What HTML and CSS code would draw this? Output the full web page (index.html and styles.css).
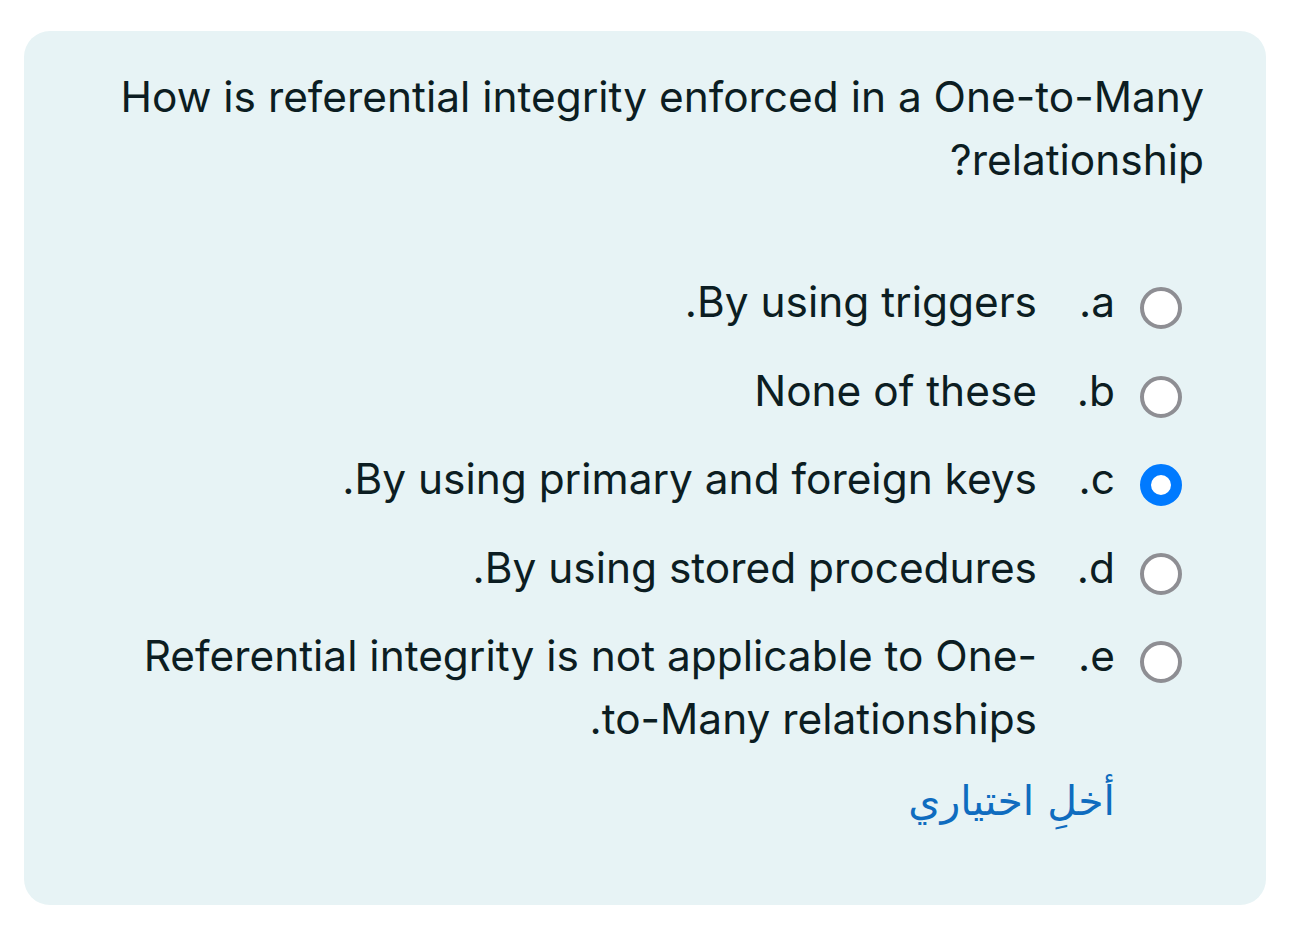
FILE: index.html
```html
<!DOCTYPE html>
<html lang="ar" dir="rtl">
<head>
<meta charset="utf-8">
<title>Question</title>
<link rel="stylesheet" href="styles.css">
</head>
<body>
<div class="card">
  <div class="question">How is referential integrity enforced in a One-to-Many relationship?</div>
  <div class="options">
    <div class="option">
      <span class="radio"></span>
      <span class="num">a.</span>
      <span class="text">By using triggers.</span>
    </div>
    <div class="option">
      <span class="radio"></span>
      <span class="num">b.</span>
      <span class="text">None of these</span>
    </div>
    <div class="option">
      <span class="radio checked"></span>
      <span class="num">c.</span>
      <span class="text">By using primary and foreign keys.</span>
    </div>
    <div class="option">
      <span class="radio"></span>
      <span class="num">d.</span>
      <span class="text">By using stored procedures.</span>
    </div>
    <div class="option">
      <span class="radio"></span>
      <span class="num">e.</span>
      <span class="text">Referential integrity is not applicable to One-to-Many relationships.</span>
    </div>
  </div>
  <div class="clear"><span class="clear-link">أخلِ اختياري</span></div>
</div>
</body>
</html>
```
FILE: styles.css
```css
html, body {
  margin: 0;
  padding: 0;
  background: #ffffff;
}
body {
  font-family: Inter, "DejaVu Sans", sans-serif;
  color: #0c1d22;
  padding: 31px 24px 0 24px;
}
.card {
  direction: rtl;
  background: #e7f3f5;
  border-radius: 26px;
  padding: 34px 62px 60px 62px;
  height: 874px;
  box-sizing: border-box;
}
.question {
  font-size: 42.4px;
  line-height: 63px;
  text-align: right;
}
.options {
  margin-top: 79px;
  margin-right: 22px;
  display: flex;
  flex-direction: column;
  gap: 25.5px;
  padding-left: 44px;
}
.option {
  display: flex;
  align-items: flex-start;
  font-size: 42.4px;
  line-height: 63px;
}
.radio {
  flex: none;
  width: 42px;
  height: 42px;
  box-sizing: border-box;
  border-radius: 50%;
  border: 4px solid #8e8e93;
  background: #ffffff;
  margin-top: 17px;
}
.radio.checked {
  border: 11px solid #007aff;
}
.num {
  flex: none;
  width: 78px;
  margin-right: 25px;
}
.text {
  flex: 1;
}
.clear {
  margin-top: 20px;
  margin-right: 89px;
}
.clear-link {
  color: #0f6cbf;
  font-family: "DejaVu Sans", sans-serif;
  font-size: 41px;
  line-height: 63px;
}
```
